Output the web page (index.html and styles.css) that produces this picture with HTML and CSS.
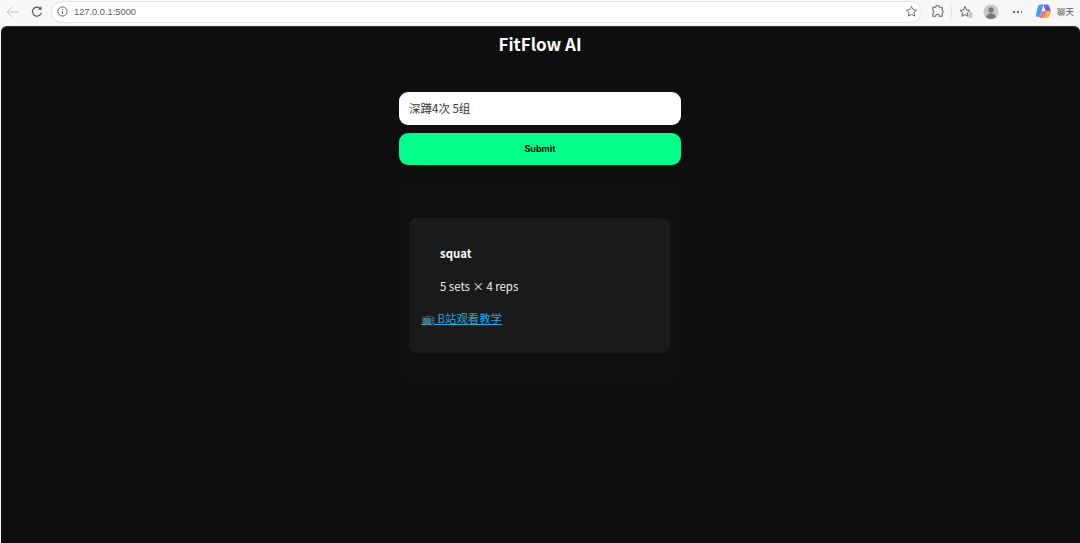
FILE: index.html
```html
<!DOCTYPE html>
<html>
<head>
<meta charset="utf-8">
<title>FitFlow AI</title>
<link rel="stylesheet" href="styles.css">
</head>
<body>
<div class="toolbar">
	<svg class="back" width="13" height="12" viewBox="0 0 13 12"><path d="M12.500 6H1M6 1 1 6l5 5" fill="none" stroke="#c8c8c8" stroke-width="1"/></svg>
	<svg class="reload" width="12" height="12" viewBox="0 0 12 12"><path d="M10.300 6.800A4.500 4.500 0 1 1 9.300 2.600M10 .6v2.700H7.300" fill="none" stroke="#555" stroke-width="1.100"/></svg>
	<div class="address">
		<svg width="11" height="11" viewBox="0 0 11 11"><circle cx="5.500" cy="5.500" r="4.600" fill="none" stroke="#666"/><path d="M5.500 5v3M5.500 3v1" stroke="#666"/></svg>
		<span class="url">127.0.0.1:5000</span>
		<svg class="star" width="13" height="13" viewBox="0 0 14 14"><path d="M7 1.500 8.700 5l3.800.5-2.800 2.600.7 3.800L7 10.100l-3.400 1.800.7-3.800L1.500 5.500 5.300 5z" fill="none" stroke="#666"/></svg>
	</div>
	<div class="tools">
		<svg width="13" height="13" viewBox="0 0 14 14"><path d="M5 2.500a2 2 0 0 1 4 0h3v3a2 2 0 0 1 0 3.500v3H9a2 2 0 0 0-4 0H2V9a2 2 0 0 0 0-3.500v-3z" fill="none" stroke="#666" stroke-width="1.100"/></svg>
		<span class="divider"></span>
		<svg width="14" height="14" viewBox="0 0 14 14"><path d="M6 1.500 7.500 5l3.500.4-2.600 2.300.7 3.600L6 9.500l-3.100 1.800.7-3.600L1 5.400 4.500 5z" fill="none" stroke="#666"/><path d="M10 8h3.500M10 10h3.500M10 12h3.500" stroke="#999"/></svg>
		<svg class="avatar" width="16" height="16" viewBox="0 0 20 20"><circle cx="10" cy="10" r="9.500" fill="#c9c9c9"/><circle cx="10" cy="7.500" r="3.300" fill="#7c7c7c"/><path d="M3.800 16.500c1-4 3.500-5 6.200-5s5.200 1 6.200 5a9.500 9.500 0 0 1-12.400 0z" fill="#7c7c7c"/></svg>
		<span class="more"></span>
		<div class="chat">
			<svg width="17" height="17" viewBox="0 0 17 17"><path d="M5.500 1.500h3L6.500 8 4.500 14H3a2.500 2.500 0 0 1-2-3L3 3.500a2.500 2.500 0 0 1 2.500-2z" fill="#3fa0f0"/><path d="M8.500 1.500H12a2.500 2.500 0 0 1 2.300 2L16 9 10.500 8z" fill="#7a5cf0"/><path d="M4.500 14 6.500 8l5.500 0-1.500 5a2.500 2.500 0 0 1-2.400 2H5z" fill="#f2729a"/><path d="M12 8h3.500a1.500 1.500 0 0 1 0 2L14 13.500a2.500 2.500 0 0 1-2.400 1.500H8z" fill="#f5b342"/></svg>
			<span>聊天</span>
		</div>
	</div>
</div>

<div class="page">
	<h1>FitFlow AI</h1>
	<div class="container">
		<input class="prompt" type="text" value="深蹲4次 5组">
		<button class="submit">Submit</button>
		<div class="results">
			<div class="card">
				<p class="name">squat</p>
				<p class="detail">5 sets × 4 reps</p>
				<a class="video" href="#">📺 B站观看教学</a>
			</div>
		</div>
	</div>
</div>
</body>
</html>
```

FILE: styles.css
```css
html, body {
	margin: 0;
	height: 100%;
}

body {
	background: #f7f7f7;
	display: flex;
	flex-direction: column;
	overflow: hidden;
	font-family: "Noto Sans CJK SC", "Noto Sans", sans-serif;
}

.toolbar {
	height: 26px;
	flex: none;
	display: flex;
	align-items: center;
	padding: 0 0 3px 6px;
	box-sizing: border-box;
}

.toolbar svg {
	flex: none;
}

.back {
	margin-right: 12px;
}

.reload {
	margin-right: 8px;
}

.address {
	flex: 1;
	height: 22px;
	background: #fff;
	border: 1px solid #e4e4e4;
	border-radius: 11px;
	box-sizing: border-box;
	display: flex;
	align-items: center;
	padding: 0 3px 0 5px;
	font-family: "Liberation Sans", sans-serif;
	font-size: 9.300px;
	color: #5c5c5c;
}

.url {
	margin-left: 6px;
}

.star {
	margin-left: auto;
}

.tools {
	display: flex;
	align-items: center;
	flex: none;
	width: 158px;
	padding-left: 9px;
	box-sizing: border-box;
}

.divider {
	flex: none;
	width: 1px;
	height: 12px;
	background: #e4e4e4;
	margin: 0 7px;
}

.avatar {
	margin-left: 10px;
}

.more {
	flex: none;
	width: 10px;
	height: 2px;
	margin-left: 13px;
	background: radial-gradient(circle, #666 1px, transparent 1.200px) 0 0 / 4px 2px repeat-x;
}

.chat {
	margin-left: 13px;
	display: flex;
	align-items: center;
	gap: 5px;
	font-size: 8.500px;
	line-height: 10px;
	color: #555;
	white-space: nowrap;
}

.chat span {
	padding-bottom: 2px;
}

.page {
	flex: 1;
	background: #0e0e0e;
	border-radius: 6px 6px 0 0;
	margin-left: 1px;
	padding-right: 1px;
	border-top: 1px solid #333;
	color: #fff;
	text-align: center;
}

h1 {
	margin: 4px 0 0;
	font-size: 17px;
	line-height: 26px;
	font-weight: 700;
}

.container {
	width: 282px;
	margin: 35px auto 0;
	display: flex;
	flex-direction: column;
}

.prompt {
	height: 33px;
	border: none;
	border-radius: 9px;
	background: #fff;
	padding: 0 10px 1px;
	box-sizing: border-box;
	font-family: "Noto Sans CJK SC", sans-serif;
	font-size: 11.500px;
	color: #333;
}

.submit {
	height: 32px;
	margin-top: 8px;
	padding: 0 0 2px;
	border: none;
	border-radius: 9px;
	background: #00ff88;
	font-family: Inter, sans-serif;
	font-size: 9px;
	font-weight: 700;
	color: #0a0a0a;
}

.results {
	margin-top: 16px;
	padding: 37px 11px 30px 10px;
	background: #101010;
	border-radius: 12px;
	text-align: left;
}

.card {
	height: 135px;
	background: #1a1a1a;
	border-radius: 8px;
	padding: 26px 11px 0;
	box-sizing: border-box;
	font-size: 11.400px;
	line-height: 18px;
}

.card p {
	margin: 0 0 15px 20px;
}

.card .detail {
	margin-bottom: 14px;
	color: #f2f2f2;
}

.name {
	font-weight: 700;
}

.video {
	display: inline-block;
	margin-left: 1px;
	color: #1ca9e6;
}
```
